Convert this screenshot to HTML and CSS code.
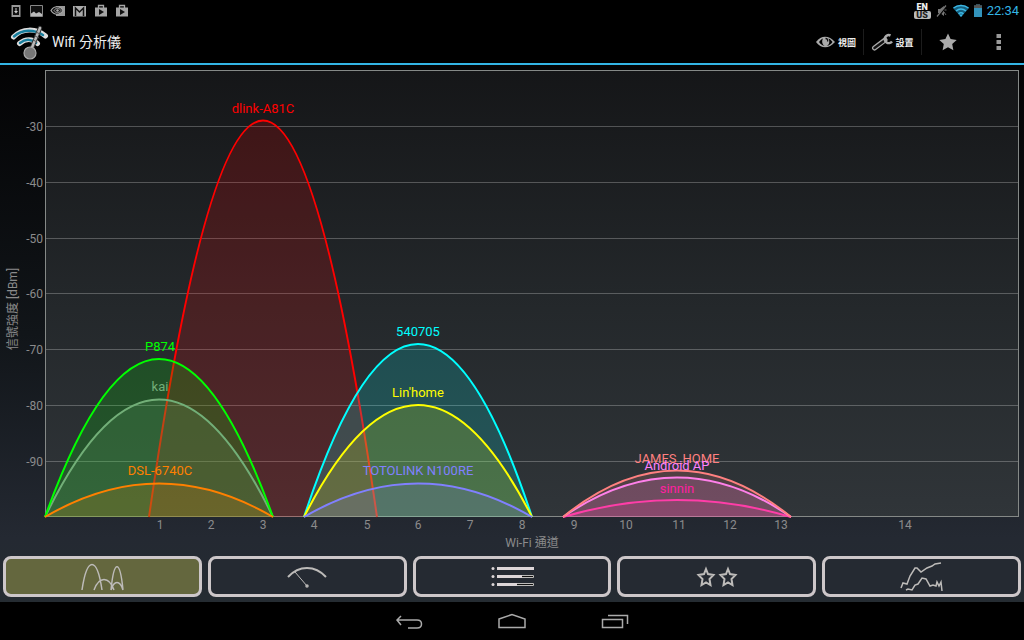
FILE: index.html
```
<!DOCTYPE html>
<html lang="zh-Hant">
<head>
    <meta charset="utf-8">
    <meta name="viewport" content="width=device-width, initial-scale=1">
    <title>Wifi 分析儀</title>
    <link rel="stylesheet" href="styles.css">
</head>
<body>
    <div class="status-bar">
        <div class="notifications">
            <svg width="14" height="14" viewBox="0 0 14 14"><path d="M3.500 1h9v12h-9z" fill="#999"/><path d="M5 3h6v8H5z" fill="#111"/><path d="M7.500 4h1v3H10l-2 2.500L6 7h1.500z" fill="#ccc"/></svg>
            <svg width="14" height="14" viewBox="0 0 14 14"><path d="M1.500 1.500h12v11h-12z" fill="#111" stroke="#888"/><path d="M2 12V9.500l3-2 2 2 3-1.500 3 2v2z" fill="#bbb"/></svg>
            <svg width="16" height="14" viewBox="0 0 16 14"><path d="M6 2h9v10H6z" fill="#999"/><path d="M1 6.500c3-5 9-5 12 0-3 5-9 5-12 0z" fill="#111" stroke="#aaa" stroke-width="1.200"/><path d="M4 6.500c2-3 5-3 7 0-2 3-5 3-7 0z" fill="none" stroke="#aaa"/><circle cx="7.500" cy="6.500" r="1.300" fill="#aaa"/></svg>
            <svg width="14" height="14" viewBox="0 0 14 14"><path d="M0 2h13v10.500H0z" fill="#aaa"/><path d="M2.500 12V4l4 4 4-4v8" fill="none" stroke="#111" stroke-width="1.500"/></svg>
            <svg width="14" height="14" viewBox="0 0 14 14"><path d="M1 3.500h12v9H1z" fill="#a5a5a5"/><path d="M4.500 4V1.500h5V4" fill="none" stroke="#a5a5a5" stroke-width="1.300"/><path d="M5 5v6l5-3z" fill="#111"/></svg>
            <svg width="14" height="14" viewBox="0 0 14 14"><path d="M1 3.500h12v9H1z" fill="#a5a5a5"/><path d="M4.500 4V1.500h5V4" fill="none" stroke="#a5a5a5" stroke-width="1.300"/><path d="M5 5v6l5-3z" fill="#111"/></svg>
        </div>
        <div class="system">
            <div class="keyboard"><span>EN</span><span class="region">US</span></div>
            <svg width="12" height="14" viewBox="0 0 12 14"><path d="M2 5h2l4-3v10L4 9H2z" fill="#777"/><path d="M2 13L11 1" stroke="#000" stroke-width="2"/><path d="M1 12.500L10 1.500" stroke="#777" stroke-width="1.200"/><path d="M8.500 6h2M8 8l2 3" stroke="#666"/></svg>
            <svg width="16" height="14" viewBox="0 0 16 14"><path d="M0 4C5-.5 11-.5 16 4L8 13z" fill="#155f7d"/><path d="M.5 4c4.500-3.500 10.500-3.500 15 0M3 7c3-2.500 7-2.500 10 0M5.500 9.800c1.500-1.200 3.500-1.200 5 0" fill="none" stroke="#3cb8e6" stroke-width="1.500"/><path d="M6 10.500h4L8 13z" fill="#3cb8e6"/></svg>
            <svg width="8" height="14" viewBox="0 0 8 14"><path d="M2 .5h4v1h2V13H0V1.500h2z" fill="#3393bb"/><path d="M2 .5h4v1h2V4H0V1.500h2z" fill="#555"/></svg>
            <span class="clock">22:34</span>
        </div>
    </div>

    <header class="action-bar">
        <svg class="logo" width="40" height="36" viewBox="0 0 40 36">
            <g fill="none" stroke-linecap="round">
                <path d="M4.500 13C13 4 27 4 36.500 12M10.500 19.500c6-5 13-5 18 0" stroke="#ddd" stroke-width="5"/>
                <path d="M5 12.500C13 5 25 5 34 11M11 19c5-4 11-4 16 0" stroke="#187f9e" stroke-width="2.500"/>
                <path d="M22 26L31 4" stroke="#333" stroke-width="4.500"/>
                <path d="M22 26L31 4" stroke="#bbb" stroke-width="2.500"/>
                <path d="M27 8l4 2M26 12l4 2M24 16l4 2" stroke="#555"/>
            </g>
            <circle cx="21" cy="29" r="6" fill="#777" stroke="#aaa" stroke-width="1.200"/>
        </svg>
        <h1>Wifi 分析儀</h1>
        <div class="actions">
            <button type="button" class="action view">
                <svg width="20" height="14" viewBox="0 0 20 14"><path d="M0 7c5-7 13-7 19 0-6 7-14 7-19 0z" fill="#aaa"/><path d="M3 7c1.500-2 2.500-3 4-3.500C5.500 6 6 10 9 11 6 10.500 4.500 9 3 7zM16.500 7c-1.500-2-2.500-3-4-3.500 1.500 3 1 6.500-2 7.500 3-.5 4.500-2 6-4z" fill="#000"/><path d="M9.500 3.500c2 0 2.500 1.500 2 3" fill="none" stroke="#111" stroke-width="1.300"/></svg>
                <span>視圖</span>
            </button>
            <button type="button" class="action settings">
                <svg width="22" height="18" viewBox="0 0 22 18"><path d="M14 7L3.500 15" stroke="#aaa" stroke-width="5" stroke-linecap="round"/><path d="M13 8L3.500 15" stroke="#111" stroke-width="2.500" stroke-linecap="round"/><path d="M19.500 2.500a4 4 0 1 0 1.500 6" fill="none" stroke="#aaa" stroke-width="2.500"/></svg>
                <span>設置</span>
            </button>
            <button type="button" class="action star" aria-label="Rate">
                <svg width="18" height="18" viewBox="0 0 18 18"><path d="M9 .5l2.600 5.600 6.100.8-4.500 4.200 1.200 6.100L9 14.200l-5.400 3 1.200-6.100L.3 6.900l6.100-.8z" fill="#aaa"/></svg>
            </button>
            <button type="button" class="action more" aria-label="More">
                <svg width="6" height="18" viewBox="0 0 6 18"><path d="M.5 1h4.500v4H.5zM.5 7h4.500v4H.5zM.5 13h4.500v4H.5z" fill="#999"/></svg>
            </button>
        </div>
    </header>

    <main class="analyzer">
        <svg class="chart" viewBox="0 0 1024 491" role="img" aria-label="Wi-Fi">
            <defs>
                <linearGradient id="plotBg" x1="0" y1="0" x2="0" y2="1">
                    <stop offset="0" stop-color="#151618"/>
                    <stop offset="0.5" stop-color="#23272a"/>
                    <stop offset="1" stop-color="#303539"/>
                </linearGradient>
            </defs>

            <rect class="plot" x="45.500" y="5.500" width="973" height="446" fill="url(#plotBg)"/>
            <path class="grid" d="M46 61.500h972M46 117.500h972M46 173.500h972M46 228.500h972M46 284.500h972M46 340.500h972M46 396.500h972"/>

            <!-- channels 1-5 -->
            <path class="curve red" d="M149 452Q263 -341 377 452"/>
            <path class="curve gray" d="M45 452Q159 217 273 452"/>
            <text class="ssid gray" x="160" y="326">kai</text>
            <path class="curve green" d="M45 452Q159 136 273 452"/>
            <path class="curve orange" d="M45 452Q159 385 273 452"/>
            <text class="ssid red" x="263" y="48">dlink-A81C</text>
            <text class="ssid green" x="160" y="286">P874</text>
            <text class="ssid orange" x="160" y="410">DSL-6740C</text>

            <!-- channel 6 -->
            <path class="curve cyan" d="M304 452Q418 106 532 452"/>
            <path class="curve yellow" d="M304 452Q418 228 532 452"/>
            <path class="curve blue" d="M304 452Q418 385 532 452"/>
            <text class="ssid cyan" x="418" y="271">540705</text>
            <text class="ssid yellow" x="418" y="332">Lin'home</text>
            <text class="ssid blue" x="418" y="410">TOTOLINK N100RE</text>

            <!-- channel 11 -->
            <path class="curve pink" d="M563 452Q677 418 791 452"/>
            <path class="curve violet" d="M563 452Q677 373 791 452"/>
            <path class="curve salmon" d="M563 452Q677 359 791 452"/>
            <text class="ssid pink" x="677" y="428">sinnin</text>
            <text class="ssid salmon" x="677" y="398">JAMES_HOME</text>
            <text class="ssid violet" x="677" y="405">Android AP</text>

            <g class="axis level">
                <text x="43" y="66">-30</text>
                <text x="43" y="122">-40</text>
                <text x="43" y="178">-50</text>
                <text x="43" y="233">-60</text>
                <text x="43" y="289">-70</text>
                <text x="43" y="345">-80</text>
                <text x="43" y="401">-90</text>
            </g>
            <g class="axis channel">
                <text x="160" y="464">1</text>
                <text x="211" y="464">2</text>
                <text x="263" y="464">3</text>
                <text x="314" y="464">4</text>
                <text x="367" y="464">5</text>
                <text x="418" y="464">6</text>
                <text x="470" y="464">7</text>
                <text x="522" y="464">8</text>
                <text x="574" y="464">9</text>
                <text x="626" y="464">10</text>
                <text x="679" y="464">11</text>
                <text x="730" y="464">12</text>
                <text x="781" y="464">13</text>
                <text x="905" y="464">14</text>
                <text x="532" y="482">Wi-Fi 通道</text>
                <text transform="translate(17 244) rotate(-90)">信號強度 [dBm]</text>
            </g>
        </svg>

        <nav class="tabs">
            <button type="button" class="tab active" aria-label="Channel graph">
                <svg width="44" height="30" viewBox="0 0 44 30"><path d="M2 28C7-6 17-6 22 28M14 28c5-14 15-14 20 0M31 28c3-31 9-31 12 0M31 28c3-10 9-10 12 0"/></svg>
            </button>
            <button type="button" class="tab" aria-label="Signal meter">
                <svg width="44" height="30" viewBox="0 0 44 30"><path class="arc" d="M3 15C14 3 30 3 41 15"/><path class="needle" d="M10 10l12 14"/><circle cx="22" cy="24" r="1"/></svg>
            </button>
            <button type="button" class="tab" aria-label="Access point list">
                <svg width="44" height="30" viewBox="0 0 44 30"><path class="meter" d="M7.500 5.500h36v2h-36zM7.500 13.500h36v2h-36zM7.500 21.500h36v2h-36z"/><path class="solid" d="M7 5h37v3H7zM7 13h25v3H7zM7 21h20v3H7z"/><circle class="solid" cx="3" cy="6.500" r="1.500"/><circle class="solid" cx="3" cy="14.500" r="1.500"/><circle class="solid" cx="3" cy="22.500" r="1.500"/></svg>
            </button>
            <button type="button" class="tab" aria-label="Channel rating">
                <svg width="44" height="30" viewBox="0 0 44 30"><path class="stars" d="M11 7l2 5 5.500 1-4 4 1 6-4.500-2.500L6.500 23l1-6-4-4 5.500-1zM33 7l2 5 5.500 1-4 4 1 6-4.500-2.500-4.500 2.500 1-6-4-4 5.500-1z"/></svg>
            </button>
            <button type="button" class="tab" aria-label="Time graph">
                <svg width="44" height="30" viewBox="0 0 44 30"><path d="M1 26l2-5 4 1 3-8 5-8 2 0 4 4 6-4 5-2 3-2 6-1M6 28l2-1 4 1 3-5 3-1 4-6 4 1 4 7 3-1 3 1 1-4 2 4 2-4 1 9"/></svg>
            </button>
        </nav>
    </main>

    <footer class="system-nav">
        <button type="button" aria-label="Back">
            <svg width="28" height="18" viewBox="0 0 28 18"><path d="M6 4L2 8l4 5M2 8h20c6 0 6 8 0 8h-9"/></svg>
        </button>
        <button type="button" aria-label="Home">
            <svg width="28" height="18" viewBox="0 0 28 18"><path d="M1 7L14 2.500 27 7v8.500H1z"/></svg>
        </button>
        <button type="button" aria-label="Recent apps">
            <svg width="28" height="18" viewBox="0 0 28 18"><path d="M1.500 7.500h20v8h-20zM7 3.500h19.500V12"/></svg>
        </button>
    </footer>
</body>
</html>
```
FILE: styles.css
```
* {
    box-sizing: border-box;
}

body {
    margin: 0;
    min-height: 100vh;
    display: flex;
    flex-direction: column;
    background: #000;
    color: #eee;
    font-family: Roboto, 'Noto Sans CJK TC', sans-serif;
}

button {
    margin: 0;
    padding: 0;
    border: 0;
    background: none;
    color: inherit;
    font-family: inherit;
    cursor: pointer;
}

svg {
    display: block;
    flex: none;
}

.status-bar {
    display: flex;
    align-items: center;
    justify-content: space-between;
    height: 21px;
    padding: 0 5px 0 8px;
}

.notifications {
    display: flex;
    gap: 7px;
}

.system {
    display: flex;
    align-items: center;
    gap: 5px;
}

.keyboard {
    display: flex;
    flex-direction: column;
    align-items: center;
    font-size: 9px;
    font-weight: 900;
    line-height: 8px;
}

.keyboard .region {
    width: 17px;
    border-radius: 2px;
    background: #bbb;
    color: #222;
    text-align: center;
}

.clock {
    color: #33b5e5;
    font-size: 13px;
    line-height: 20px;
}

.action-bar {
    display: flex;
    align-items: center;
    height: 44px;
    padding-left: 9px;
    border-bottom: 2px solid #33b5e5;
}

.action-bar h1 {
    margin: 0 0 0 3px;
    font-size: 14px;
    font-weight: 400;
    line-height: 20px;
}

.actions {
    display: flex;
    align-items: center;
    margin-left: auto;
}

.action {
    display: flex;
    align-items: center;
    justify-content: center;
    height: 26px;
    gap: 2px;
    font-size: 9px;
    font-weight: 700;
}

.action.view,
.action.settings {
    border-right: 1px solid #1c1c1c;
}

.action.view {
    padding-right: 7px;
}

.action.settings {
    width: 58px;
}

.action.star,
.action.more {
    width: 51px;
}

.analyzer {
    background: linear-gradient(#030304, #111519 50%, #242932 88%, #252c32);
}

.chart {
    width: 100%;
    height: auto;
}

.plot {
    stroke: #858987;
}

.grid {
    fill: none;
    stroke: #fff;
    stroke-opacity: 0.25;
}

.curve {
    stroke: currentColor;
    stroke-width: 2px;
    fill: currentColor;
    fill-opacity: 0.17;
}

.ssid {
    fill: currentColor;
    font-size: 13px;
    text-anchor: middle;
}

.red { color: #f00; }
.gray { color: #8a9f91; }
.green { color: #0f0; }
.orange { color: #ff8000; }
.cyan { color: #0ff; }
.yellow { color: #ff0; }
.blue { color: #8080ff; }
.pink { color: #ff20a0; }
.violet { color: #ff80ff; }
.salmon { color: #ff8080; }

.axis {
    fill: #8b8b8c;
    font-size: 12px;
}

.level {
    text-anchor: end;
}

.channel {
    text-anchor: middle;
}

.tabs {
    display: flex;
    gap: 6px;
    padding: 0 3px 5px;
}

.tab {
    display: flex;
    flex: 1;
    align-items: center;
    justify-content: center;
    height: 41px;
    border: 3px solid #cdc7c9;
    border-radius: 8px;
    background: #252a32;
}

.tab.active {
    background: #64673e;
}

.tab svg {
    fill: none;
    stroke: #bdbbb9;
    stroke-width: 1.5px;
}

.tab .arc,
.tab .stars {
    stroke-width: 2px;
}

.tab .needle {
    stroke-width: 1px;
}

.tab .meter {
    fill: #111;
    stroke-width: 1px;
}

.tab .solid {
    fill: #ddd6d8;
    stroke: none;
}

.system-nav {
    display: flex;
    align-items: center;
    justify-content: center;
    gap: 75px;
    height: 38px;
}

.system-nav svg {
    fill: none;
    stroke: #aaa;
    stroke-width: 1.5px;
}
```
